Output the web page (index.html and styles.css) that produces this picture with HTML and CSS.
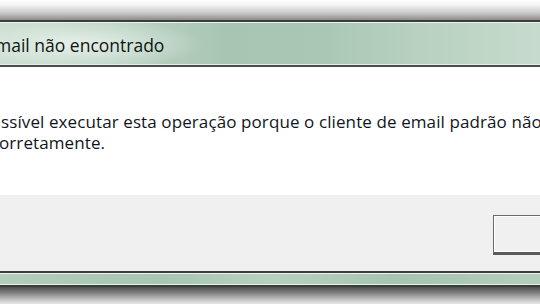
FILE: index.html
```html
<!DOCTYPE html>
<html lang="pt">
<head>
<meta charset="utf-8">
<title>Email não encontrado</title>
<link rel="stylesheet" href="styles.css">
</head>
<body>
<div class="shadow-top"></div>
<div class="dialog">
  <div class="titlebar"><span class="title">mail não encontrado</span></div>
  <div class="content">
    <p class="msg">ssível executar esta operação porque o cliente de email padrão não</p>
    <p class="msg msg2">orretamente.</p>
  </div>
  <div class="footer">
    <button class="btn" type="button"></button>
  </div>
  <div class="frame-bottom"></div>
</div>
<div class="shadow-bottom"></div>
</body>
</html>
```
FILE: styles.css
```css
html, body {
  margin: 0;
  padding: 0;
}
body {
  width: 540px;
  height: 304px;
  overflow: hidden;
  background: #ffffff;
  font-family: "Open Sans", "DejaVu Sans", sans-serif;
}
.shadow-top {
  height: 20px;
  background: linear-gradient(to bottom, #ffffff 0%, #f4f4f4 25%, #c8c8c8 65%, #8c8c8c 100%);
}
.dialog {
  display: flex;
  flex-direction: column;
}
.titlebar {
  height: 43px;
  border-top: 2px solid #3a3d3b;
  border-bottom: 2px solid #4a4d4b;
  box-shadow: inset 0 1px 0 #eaf3ed, inset 0 -1px 0 #e4efe8;
  background:
    radial-gradient(ellipse 130px 26px at 75px 22px, rgba(236,244,238,0.85), rgba(236,244,238,0) 100%),
    linear-gradient(to right, #c9ddd0 0%, #bcd4c5 20%, #a8c5b3 42%, #aac7b5 60%, #b8d1c1 78%, #c6dbcd 100%);
  display: flex;
  align-items: center;
  overflow: hidden;
}
.title {
  margin-left: -5px;
  font-size: 17.5px;
  color: #111513;
  white-space: nowrap;
  padding-top: 2px;
}
.content {
  height: 128px;
  background: #ffffff;
  padding-top: 44px;
  box-sizing: border-box;
  overflow: hidden;
}
.msg {
  margin: 0;
  font-size: 17px;
  line-height: 21px;
  color: #121520;
  white-space: nowrap;
  padding-left: 1px;
  letter-spacing: 0.1px;
}
.msg2 {
  margin-left: -2px;
}
.footer {
  height: 76px;
  background: #f0f0f0;
  display: flex;
  justify-content: flex-end;
  align-items: flex-start;
  padding-top: 20px;
  box-sizing: border-box;
}
.btn {
  width: 70px;
  height: 40px;
  margin-right: -23px;
  border: 1px solid #6a6a6a;
  border-bottom: 3px solid #5a5a5a;
  border-radius: 0;
  box-shadow: inset 0 0 0 1px #ffffff;
  background: #f0f0f0;
  padding: 0;
}
.frame-bottom {
  height: 12px;
  border-top: 2px solid #3a3d3b;
  border-bottom: 2px solid #3a3d3b;
  box-shadow: inset 0 1px 0 #eaf3ed, inset 0 -1px 0 #e4efe8;
  background: linear-gradient(to right, #b2cdbb 0%, #a8c6b2 30%, #b6d0bf 50%, #a6c4b0 75%, #b4cebd 100%);
}
.shadow-bottom {
  height: 17px;
  background: linear-gradient(to bottom, #4e4e4e 0%, #8a8a8a 40%, #c4c4c4 75%, #e6e6e6 100%);
}
```
